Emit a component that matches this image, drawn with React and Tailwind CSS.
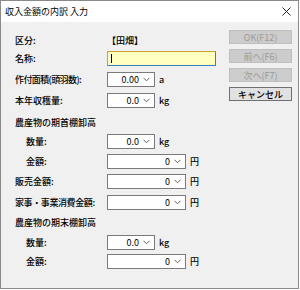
import React from "react";

const font = { fontFamily: '"Noto Sans CJK JP", "Noto Sans", sans-serif' };

function Chevron() {
  return (
    <svg width="7" height="5" viewBox="0 0 7 5" className="shrink-0">
      <polyline points="0.5,0.8 3.5,3.8 6.5,0.8" fill="none" stroke="#606060" strokeWidth="1" />
    </svg>
  );
}

function Num({ value, wide }) {
  return (
    <div
      className={
        "h-[15px] bg-white border border-[#7a7a7a] flex items-center justify-end pr-[4px] gap-[4px] " +
        (wide ? "w-[79px]" : "w-[48px]")
      }
    >
      <span className="text-[9px] leading-none text-black">{value}</span>
      <Chevron />
    </div>
  );
}

function Row({ label, indent, children, mt }) {
  return (
    <div className={"flex items-center h-[18px] " + mt}>
      <div className={"w-[92px] shrink-0 text-[9px] font-medium leading-none text-black whitespace-nowrap " + (indent ? "pl-[11px]" : "")}>
        {label}
      </div>
      {children}
    </div>
  );
}

function Unit({ children }) {
  return <span className="ml-[4px] text-[9px] font-medium leading-none text-black">{children}</span>;
}

export default function App() {
  return (
    <div style={font} className="w-[300px] h-[290px] bg-white">
      <div className="w-[299px] h-[289px] border border-[#8a8a8a] flex flex-col bg-[#f0f0f0]">
        <div className="h-[21px] bg-white flex items-center justify-between pl-[4px] pr-[7px] shrink-0">
          <span className="text-[9px] leading-none text-black">収入金額の内訳 入力</span>
          <svg width="9" height="9" viewBox="0 0 9 9">
            <path d="M0.5 0.5 L8.5 8.5 M8.5 0.5 L0.5 8.5" stroke="#222" strokeWidth="1" />
          </svg>
        </div>
        <div className="flex flex-1">
          <div className="w-[228px] pl-[14px] pt-[9px]">
            <Row label="区分:" mt="">
              <span className="text-[9px] font-medium leading-none text-black">【田畑】</span>
            </Row>
            <Row label="名称:" mt="">
              <div className="w-[109px] h-[15px] bg-[#ffffc0] border border-[#c9a530] border-r-[#3a7fc0] border-b-[#3a7fc0] flex items-center pl-[3px]">
                <div className="w-[1px] h-[9px] bg-black" />
              </div>
            </Row>
            <Row label={<span className="tracking-[-0.6px]">作付面積(頭羽数):</span>} mt="mt-[3px]">
              <Num value="0.00" />
              <Unit>a</Unit>
            </Row>
            <Row label="本年収穫量:" mt="mt-[3px]">
              <Num value="0.0" />
              <Unit>kg</Unit>
            </Row>
            <Row label="農産物の期首棚卸高" mt="mt-[4px]" />
            <Row label="数量:" indent mt="mt-[1px]">
              <Num value="0.0" />
              <Unit>kg</Unit>
            </Row>
            <Row label="金額:" indent mt="mt-[2px]">
              <Num value="0" wide />
              <Unit>円</Unit>
            </Row>
            <Row label="販売金額:" mt="mt-[2px]">
              <Num value="0" wide />
              <Unit>円</Unit>
            </Row>
            <Row label={<span className="tracking-[-0.4px]">家事・事業消費金額:</span>} mt="mt-[3px]">
              <Num value="0" wide />
              <Unit>円</Unit>
            </Row>
            <Row label="農産物の期末棚卸高" mt="mt-[2px]" />
            <Row label="数量:" indent mt="mt-[2px]">
              <Num value="0.0" />
              <Unit>kg</Unit>
            </Row>
            <Row label="金額:" indent mt="mt-[1px]">
              <Num value="0" wide />
              <Unit>円</Unit>
            </Row>
          </div>
          <div className="w-[63px] flex flex-col gap-[5px] pt-[8px]">
            <button className="h-[14px] bg-[#cccccc] border border-[#bfbfbf] text-[9px] leading-none text-[#9a9a9a]">OK(F12)</button>
            <button className="h-[14px] bg-[#cccccc] border border-[#bfbfbf] text-[9px] leading-none text-[#9a9a9a]">前へ(F6)</button>
            <button className="h-[14px] bg-[#cccccc] border border-[#bfbfbf] text-[9px] leading-none text-[#9a9a9a]">次へ(F7)</button>
            <button className="h-[14px] bg-[#e1e1e1] border border-[#707070] text-[9px] font-medium leading-none text-black">キャンセル</button>
          </div>
        </div>
      </div>
    </div>
  );
}
